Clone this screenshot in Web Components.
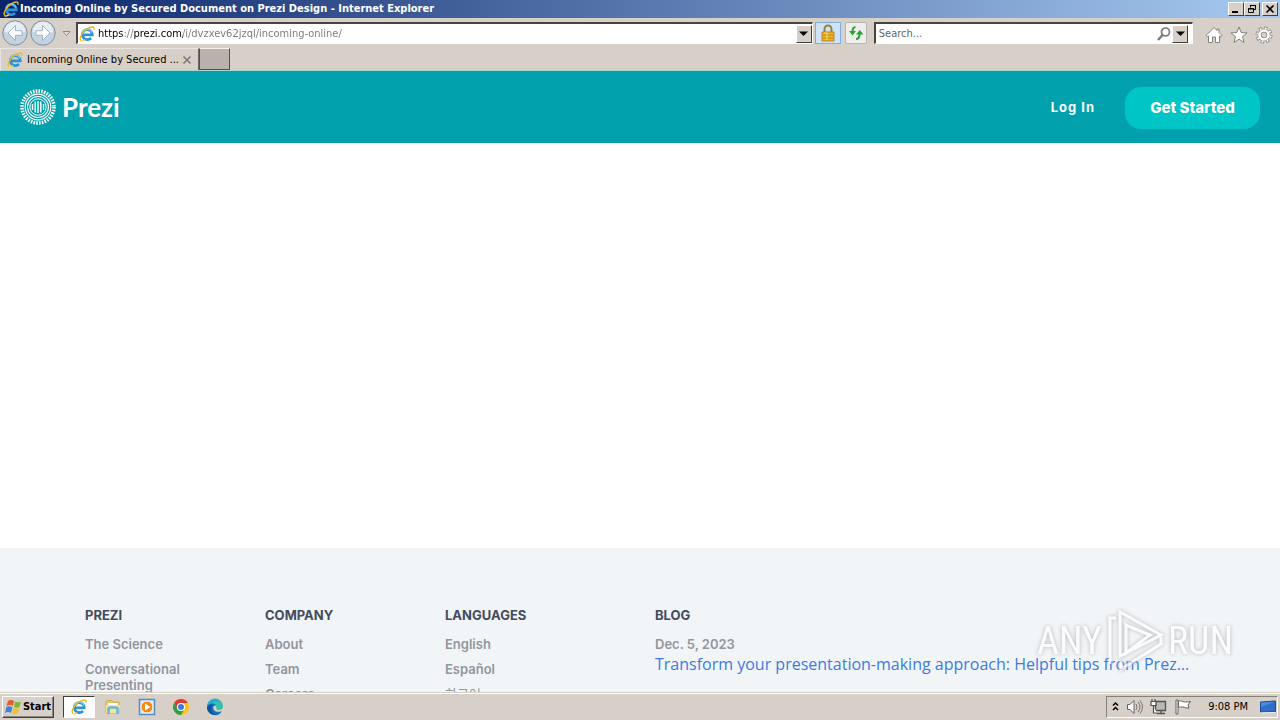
<!DOCTYPE html>
<html lang="en">
<head>
<meta charset="utf-8">
<title>Incoming Online by Secured Document on Prezi Design</title>
<style>
html, body { height: 100%; margin: 0; }
body { overflow: hidden; background: #fff; font: 11px/14px "DejaVu Sans Condensed", "Noto Sans", sans-serif; color: #000; }
</style>
</head>
<body>
<browser-desktop></browser-desktop>
<script>
const ui = `*,*::before,*::after{box-sizing:border-box} button,input{font:inherit;color:inherit;margin:0;padding:0;border:0;background:none} button{display:flex;align-items:center;justify-content:center} svg{display:block;flex:none}`;
function define(name, css, html, setup) {
  const template = document.createElement('template');
  template.innerHTML = `<style>${ui}${css}</style>${html}`;
  customElements.define(name, class extends HTMLElement {
    constructor() {
      super();
      this.attachShadow({ mode: 'open' }).append(template.content.cloneNode(true));
      if (setup) this.setup = setup;
    }
    connectedCallback() { if (this.setup) this.setup(this.shadowRoot); }
  });
}

const icons = {
  ie: `<svg viewBox="0 0 18 18"><path d="M4.300 9.800H14.300A5 5 0 1 0 13 13" fill="none" stroke="#2b93d8" stroke-width="2.700"/><path d="M4 8A5.300 5.300 0 0 1 14 7.500" fill="none" stroke="#7ccdf5" stroke-width="1.200"/><path d="M2.800 15.600C.4 12.600 6.200 4 12.800 2.200c2.800-.8 3.700.4 3 2.600" fill="none" stroke="#f0b51d" stroke-width="1.400"/><path d="M2.800 15.600c1 .8 2.600.3 4.400-.9" fill="none" stroke="#f7d553" stroke-width="1.400"/></svg>`,
  folder: `<svg viewBox="0 0 18 18"><path d="M2 3.500l1-1h5l1 1.500h6V15H2z" fill="#e9c75f" stroke="#c59f3a" stroke-width=".7"/><path d="M4 5h10v4H4z" fill="#fff"/><path d="M2 7h14l-1 8H2z" fill="#f7e59a"/><path d="M4.500 16v-5q0-1.500 1.500-1.500h6q1.500 0 1.500 1.500v5" fill="none" stroke="#67b6dc" stroke-width="2.600"/></svg>`,
  media: `<svg viewBox="0 0 18 18"><path d="M1.500 1.500h15v15h-15z" fill="#d6e8f7" stroke="#4f8fc4" stroke-width="1.500"/><circle cx="9" cy="9" r="6" fill="#f08a1b" stroke="#fff3dc"/><path d="M7 5.500L12.500 9 7 12.500z" fill="#fff"/></svg>`,
  chrome: `<svg viewBox="0 0 18 18"><circle cx="9" cy="9" r="8" fill="#f9c515"/><path d="M2.070 5A8 8 0 0 1 15.930 5H9A4 4 0 0 0 5.500 11z" fill="#e23c2e"/><path d="M2.070 5A8 8 0 0 0 9 17l3.500-6A4 4 0 0 1 5.500 11z" fill="#2d9d4c"/><circle cx="9" cy="9" r="4" fill="#fff"/><circle cx="9" cy="9" r="3" fill="#3b78e7"/></svg>`,
  edge: `<svg viewBox="0 0 18 18"><path d="M1 9a8 8 0 0 1 16-1c0 3-2 4-4.500 4-2 0-2.500-.8-2-1.500C11 8 8.500 6.500 6 7 3 7.500 1 9 1 9z" fill="#35c1a8"/><path d="M1 9C1 4 5 1 9 1c3 0 5 1.400 6.400 3C12 2 8 3 6 5 3.500 5.500 2 7 1 9z" fill="#2aa6d8"/><path d="M1 9c.5-3.500 6.500-5 9-2-3 .5-3.500 3-2 5 1.500 2 5 2.500 8 1A8 8 0 0 1 1 9z" fill="#1671c0"/><path d="M5.500 10c-.5 3.500 2 6 5.500 6.500C5 18 2 14 1 10c1-3 4-4.300 6-3.200C6 7.500 5.600 8.600 5.500 10z" fill="#0e559f"/></svg>`,
  lock: `<svg viewBox="0 0 18 18"><path d="M5.500 9V5a3.500 3.500 0 0 1 7 0v4" fill="none" stroke="#9b8138" stroke-width="2"/><path d="M3 8h12v9H3z" fill="#edb827" stroke="#a9731a" stroke-width=".8"/><path d="M3.500 11h11M3.500 14h11" stroke="#b98012" stroke-width="1"/><path d="M5 9h3v7" fill="none" stroke="#fbdc77"/></svg>`,
  refresh: `<svg viewBox="0 0 18 18"><path d="M8.500 3C5.800 3 5.500 5 5.500 8M9 15c3 0 3.500-2 3.500-5" fill="none" stroke="#2f9e38" stroke-width="2"/><path d="M2 7h7l-3.500 4.500zM9 10.500h7.500L12.800 6z" fill="#2f9e38"/></svg>`,
  search: `<svg viewBox="0 0 16 16"><circle cx="9.500" cy="6" r="4" fill="none" stroke="#77777c" stroke-width="1.700"/><path d="M6.500 9L2 14" stroke="#77777c" stroke-width="2.300"/></svg>`,
  down: `<svg viewBox="0 0 9 9"><path d="M0 2.500h9L4.500 7z"/></svg>`,
  recent: `<svg viewBox="0 0 9 9"><path d="M1 2.500h7L4.500 6.500z" fill="#e4e0da" stroke="#8d8984"/></svg>`,
  back: `<svg viewBox="0 0 28 28"><circle cx="14" cy="14" r="12.200" fill="#c4d3e2" stroke="#7f8c99"/><path d="M3.500 13a10.500 10.500 0 0 1 21 0q-10 3-21 0" fill="#e7edf3"/><path d="M14.500 6.500L7 14l7.500 7.500V16.300H21v-4.600h-6.500z" fill="#fff" stroke="#92a4b6" stroke-width=".8"/></svg>`,
  home: `<svg viewBox="0 0 18 18"><path d="M1 9.500L9 1.500l3 3V3h2v3.500l3 3-1.500 1.300-1-1V16.500h-4V11h-3v5.500h-4V9.800l-1 1z" fill="#fff" stroke="#85817d"/></svg>`,
  star: `<svg viewBox="0 0 18 18"><path d="M9 1l2.200 5.500 5.900.4-4.600 3.700 1.500 5.900L9 13.200l-5 3.300 1.500-5.900L.9 6.900l5.900-.4z" fill="#fff" stroke="#85817d"/></svg>`,
  gear: `<svg viewBox="0 0 18 18"><circle cx="9" cy="9" r="6.700" fill="none" stroke="#85817d" stroke-width="3.500" stroke-dasharray="3 2.262"/><circle cx="9" cy="9" r="4.500" fill="none" stroke="#85817d" stroke-width="4"/><circle cx="9" cy="9" r="6.700" fill="none" stroke="#fff" stroke-width="2" stroke-dasharray="1.800 3.462" stroke-dashoffset="-.6"/><circle cx="9" cy="9" r="4.500" fill="none" stroke="#fff" stroke-width="2.600"/></svg>`,
  flag: `<svg viewBox="0 0 18 18"><path d="M2 2h2v14H2z" fill="#fff" stroke="#65615c"/><path d="M4.500 3c3-1 4 1 6 1s3 0 6-.5L14 7l1 3c-3 .5-4-1-6-1s-3 0-4.500.5z" fill="#fff" stroke="#65615c"/></svg>`,
  sound: `<svg viewBox="0 0 18 18"><path d="M1.500 6.500H4l4-4v13l-4-4H1.500z" fill="#fff" stroke="#65615c"/><path d="M10 6q2 3 0 6M12 4q4 5 0 10M14 2.500q5 6.500 0 13" fill="none" stroke="#77736d"/></svg>`,
  network: `<svg viewBox="0 0 18 18"><path d="M5.500 3.500h10v9h-10zM7 15.500h8M11 12.500v3" fill="#b9b8b4" stroke="#55524e" stroke-width="1.300"/><path d="M2 1v3M5 1v3M1 3.500h5v4H1zM3.500 8v7H7" fill="#fff" stroke="#55524e" stroke-width="1.200"/></svg>`,
  desktop: `<svg viewBox="0 0 18 18"><path d="M1.500 4L16.500 3v10.500l-15 .5z" fill="#2f6fc9" stroke="#204b91"/><path d="M2 4.500L15 4 2 9z" fill="#4f8bdc"/><path d="M2 15l14-.5" stroke="#eee"/></svg>`,
  windows: `<svg viewBox="0 0 18 18"><path d="M3 3q3-2 6 0L8 8Q5 6 1.500 8z" fill="#e9592b"/><path d="M10 3.500q3 1.500 6 0L14.500 9q-3 1.500-5.500 0z" fill="#7ab83a"/><path d="M1.300 9.200q3-2 6.200 0L6 15q-3-2-6 0z" fill="#3f83d2"/><path d="M8.500 10q3 1.500 5.700 0l-1.500 5.500q-2.500 1.500-5.500-.2z" fill="#f4bf27"/></svg>`,
  chevrons: `<svg viewBox="0 0 9 12"><path d="M2 4.500L4.500 2 7 4.500M2 9l2.500-2.500L7 9" fill="none" stroke="#000" stroke-width="1.500"/></svg>`,
  close: `<svg viewBox="0 0 10 10"><path d="M1.500 1.500l7 7M8.500 1.500l-7 7" stroke="currentColor" stroke-width="1.700"/></svg>`,
  minimize: `<svg viewBox="0 0 10 10"><path d="M1 8h6" stroke="#000" stroke-width="2"/></svg>`,
  restore: `<svg viewBox="0 0 10 10"><path d="M3.500 3.500V1.500h5v4h-2M1.500 4.500h5v4h-5zM1 5h6M3 1.500h6" fill="none" stroke="#000"/></svg>`
};
define('ui-icon', `:host{display:block;width:18px;height:18px;flex:none}span{display:block;height:100%}svg{width:100%;height:100%}`, `<span></span>`, function (root) {
  root.querySelector('span').innerHTML = icons[this.getAttribute('name')];
});

define('window-title', `
:host{display:flex;align-items:center;height:18px;flex:none;padding:0 2px;background:linear-gradient(90deg,#0a246a,#a6caf0);color:#fff}
h1{font:bold 11px/18px "DejaVu Sans Condensed","Noto Sans",sans-serif;margin:0;flex:1;white-space:nowrap;overflow:hidden}
button{width:16px;height:14px;color:#000;background:#d6d0c8;border:1px solid;border-color:#fff #404040 #404040 #fff}
.close{margin-left:2px}.small{width:10px;height:10px}`,
`<ui-icon name="ie"></ui-icon><h1><slot></slot></h1>
<button aria-label="Minimize"><ui-icon class="small" name="minimize"></ui-icon></button><button aria-label="Restore"><ui-icon class="small" name="restore"></ui-icon></button><button class="close" aria-label="Close"><ui-icon class="small" name="close"></ui-icon></button>`);

define('browser-toolbar', `
:host{display:flex;align-items:center;height:30px;flex:none;padding:0 4px 0 1px;background:#d6d0c8}
.nav{width:28px;height:28px}.nav ui-icon{width:28px;height:28px}.fwd{transform:scaleX(-1)}
.hist{width:19px;height:20px}.hist ui-icon,.drop ui-icon{width:9px;height:9px}
.field{display:flex;align-items:center;height:22px;background:#fff;border:solid;border-width:2px 1px 1px 2px;border-color:#484440 #fff #fff #484440;min-width:0}
.address{flex:738}.find{flex:318}
input{flex:1;min-width:0;outline:0;height:18px}
.address input{padding-left:2px;background:linear-gradient(90deg,#000 0 28px,#777 28px 38px,#000 38px 87px,#777 87px) text;-webkit-text-fill-color:transparent}
.find input{padding-left:3px;color:#555}
.find input::placeholder{color:#666;opacity:1}
.drop{width:16px;height:18px;background:#d6d0c8;border:1px solid;border-color:#fff #404040 #404040 #fff}
.lock{width:26px;height:22px;margin:0 3px 0 2px;background:#cfe2f7;border:1px solid #80aee0}
.reload{width:22px;height:22px;margin:0 7px 0 1px;background:#eee;border:1px solid #b8b4ae;border-radius:2px}
.find .drop{margin-right:4px}.tool{width:25px;height:26px}.tools{display:flex;padding:4px 0 0 8px}
.go{width:16px;height:16px}.go ui-icon{width:16px;height:16px}`,
`<button class="nav" aria-label="Back"><ui-icon name="back"></ui-icon></button><button class="nav fwd" aria-label="Forward"><ui-icon name="back"></ui-icon></button><button class="hist" aria-label="Recent pages"><ui-icon name="recent"></ui-icon></button>
<div class="field address"><ui-icon name="ie"></ui-icon><input aria-label="Address" value="https://prezi.com/i/dvzxev62jzql/incoming-online/"><button class="drop" aria-label="Show addresses"><ui-icon name="down"></ui-icon></button></div>
<button class="lock" aria-label="Security report"><ui-icon name="lock"></ui-icon></button><button class="reload" aria-label="Refresh"><ui-icon name="refresh"></ui-icon></button>
<div class="field find"><input aria-label="Search" placeholder="Search..."><button class="go" aria-label="Go"><ui-icon name="search"></ui-icon></button><button class="drop" aria-label="Search options"><ui-icon name="down"></ui-icon></button></div>
<div class="tools"><button class="tool" aria-label="Home"><ui-icon name="home"></ui-icon></button><button class="tool" aria-label="Favorites"><ui-icon name="star"></ui-icon></button><button class="tool" aria-label="Settings"><ui-icon name="gear"></ui-icon></button></div>`);

define('browser-tabs', `
:host{display:flex;height:23px;flex:none;background:#d6d0c8;border-bottom:1px solid #a9d5cd}
.tab{display:flex;align-items:center;width:199px;padding:0 6px 0 5px;gap:3px;border:1px solid #e9e6e1;border-bottom:0;border-right:1px solid #6a6662}
.tab span{flex:1;white-space:nowrap;text-align:left}.tab ui-icon.x{width:10px;height:10px;color:#807c78}
.new{width:31px;height:22px;background:#b9b1ab;border:1px solid #55504c;border-top-color:#f4f2ee}`,
`<button class="tab"><ui-icon name="ie"></ui-icon><span>Incoming Online by Secured ...</span><ui-icon class="x" name="close"></ui-icon></button><button class="new" aria-label="New tab"></button>`);

define('prezi-logo', `:host{display:block}a{display:flex;align-items:center;gap:6px;color:#fff;text-decoration:none;font:bold 26px/36px Lato,sans-serif}svg{width:36px;height:36px}`,
`<a href="#"><svg viewBox="0 0 36 36" fill="none" stroke="#fff"><circle cx="18" cy="18" r="16" stroke-width="3.600" stroke-dasharray="1.600 1.192"/><circle cx="18" cy="18" r="12.800" stroke-width="1.200"/><circle cx="18" cy="18" r="10.500" stroke-width="1.100"/><circle cx="18" cy="18" r="8.200" stroke-width="1"/><path d="M12.500 15v6M15.200 12.500v11M18 12v12M20.800 12.500v11M23.500 15v6" stroke-width="1.400"/></svg><slot></slot></a>`);

define('site-header', `
:host{display:flex;align-items:center;justify-content:space-between;height:72px;flex:none;padding:0 20px;background:#00a0ac;color:#fff}
nav{display:flex;align-items:center;gap:30px}
a{color:#fff;text-decoration:none;font:bold 13px/16px Inter,"Open Sans",sans-serif;letter-spacing:1px}
button{width:135px;height:42px;margin-top:2px;border-radius:16px;background:#00c5c6;font:800 15px/20px Inter,"Open Sans",sans-serif;color:#fff}`,
`<prezi-logo>Prezi</prezi-logo><nav><a href="#">Log In</a><button>Get Started</button></nav>`);

define('footer-column', `
:host{display:block;min-width:0;font:600 13px/16px Inter,"Noto Sans CJK KR",sans-serif;color:#92969e}
h2{margin:0 0 13px;font:bold 13px/16px Inter,sans-serif;color:#434b5c}
::slotted(a){display:block;margin-bottom:9px;color:inherit;text-decoration:none}`,
`<h2></h2><slot></slot>`, function (root) { root.querySelector('h2').textContent = this.getAttribute('heading'); });

define('site-footer', `
:host{display:block;height:144px;flex:none;overflow:hidden;background:#f2f5f8}
.columns{display:grid;grid-template-columns:180px 180px 210px 1fr;width:calc(100% - 170px);max-width:1110px;margin:0 auto;padding-top:59px}
.narrow{max-width:120px}time{display:block}
:lang(ko){font-weight:400}
a.post{color:#3c7be0;font:16px/24px "Open Sans",sans-serif;white-space:nowrap}`,
`<div class="columns">
<footer-column heading="PREZI"><a href="#">The Science</a><a class="narrow" href="#">Conversational Presenting</a></footer-column>
<footer-column heading="COMPANY"><a href="#">About</a><a href="#">Team</a><a href="#">Careers</a></footer-column>
<footer-column heading="LANGUAGES"><a href="#">English</a><a href="#">Español</a><a href="#" lang="ko">한국어</a></footer-column>
<footer-column heading="BLOG"><time datetime="2023-12-05">Dec. 5, 2023</time><a class="post" href="#">Transform your presentation-making approach: Helpful tips from Prez…</a></footer-column>
</div>`);

define('run-watermark', `
:host{position:absolute;right:47px;bottom:20px;display:flex;align-items:center;gap:4px;pointer-events:none;opacity:.7;color:#fff;font:38px/62px "Roboto Condensed","Liberation Sans Narrow",Roboto,sans-serif;filter:drop-shadow(0 0 2px #999)}
svg{width:58px;height:62px}`,
`<span>ANY</span><svg viewBox="0 0 58 62" fill="none" stroke="#fff" stroke-width="3"><path d="M4 54V8h6"/><path d="M14 2v44L55 25z"/><path d="M15 51v8l40-25v-7M20 15v28l24-18z"/></svg><span>RUN</span>`);

define('web-page', `:host{display:flex;flex-direction:column;flex:1;min-height:0;position:relative;overflow:hidden;background:#fff}main{flex:1}`,
`<site-header></site-header><main></main><site-footer></site-footer><run-watermark></run-watermark>`);

define('task-bar', `
:host{display:flex;align-items:center;height:28px;flex:none;padding:1px 2px 0;background:#d6d0c8;border-top:1px solid #d5d2c4;box-shadow:inset 0 1px #fff}
.start{width:52px;height:22px;border:1px solid;border-color:#fff #404040 #404040 #fff;box-shadow:inset -1px -1px #8b8781;font-weight:bold}
.apps{display:flex;gap:2px;margin-left:9px;flex:1}.apps button{width:32px;height:22px}
.apps .on{background:#fff;border:1px solid;border-color:#404040 #fff #fff #404040}
.tray{display:flex;align-items:center;height:22px;padding:0 0 0 4px;gap:6px;border:1px solid;border-color:#85817b #fff #fff #85817b}
.tray .up{width:9px;height:12px}.tray time{padding:0 5px 0 10px;white-space:nowrap}`,
`<button class="start"><ui-icon name="windows"></ui-icon>Start</button>
<div class="apps"><button class="on" aria-label="Internet Explorer"><ui-icon name="ie"></ui-icon></button><button aria-label="Explorer"><ui-icon name="folder"></ui-icon></button><button aria-label="Media Player"><ui-icon name="media"></ui-icon></button><button aria-label="Chrome"><ui-icon name="chrome"></ui-icon></button><button aria-label="Edge"><ui-icon name="edge"></ui-icon></button></div>
<div class="tray"><ui-icon class="up" name="chevrons"></ui-icon><ui-icon name="sound"></ui-icon><ui-icon name="network"></ui-icon><ui-icon name="flag"></ui-icon><time>9:08 PM</time><ui-icon name="desktop"></ui-icon></div>`);

define('browser-desktop', `:host{display:flex;flex-direction:column;height:100vh}`,
`<window-title>Incoming Online by Secured Document on Prezi Design - Internet Explorer</window-title><browser-toolbar></browser-toolbar><browser-tabs></browser-tabs><web-page></web-page><task-bar></task-bar>`);
</script>
</body>
</html>
